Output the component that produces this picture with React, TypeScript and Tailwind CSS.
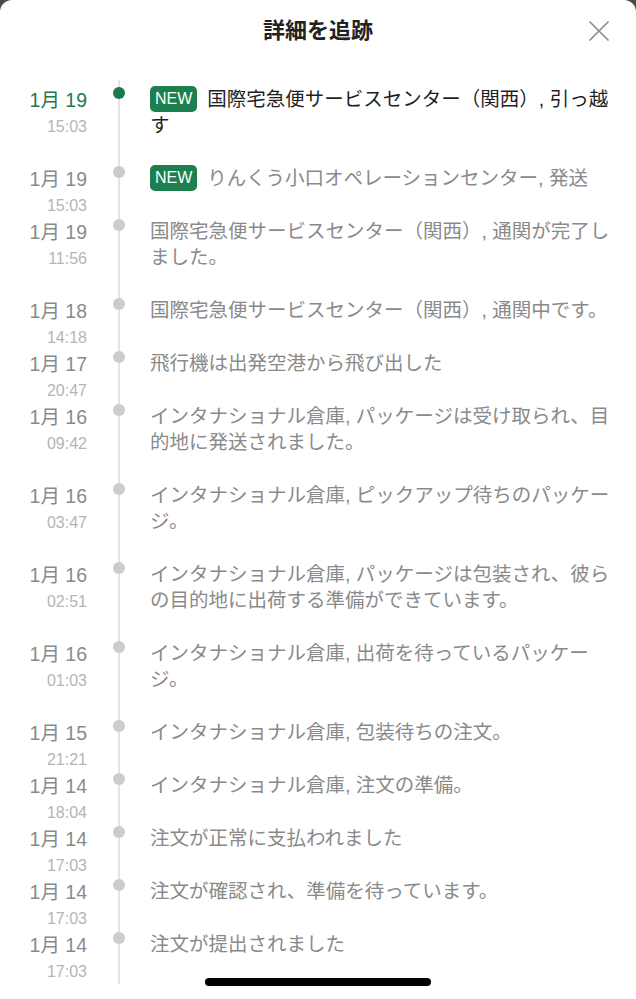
import React from "react";

type Item = { date: string; time: string; text: string; isNew?: boolean };

const items: Item[] = [
  { date: "1月 19", time: "15:03", text: "国際宅急便サービスセンター（関西）, 引っ越す", isNew: true },
  { date: "1月 19", time: "15:03", text: "りんくう小口オペレーションセンター, 発送", isNew: true },
  { date: "1月 19", time: "11:56", text: "国際宅急便サービスセンター（関西）, 通関が完了しました。" },
  { date: "1月 18", time: "14:18", text: "国際宅急便サービスセンター（関西）, 通関中です。" },
  { date: "1月 17", time: "20:47", text: "飛行機は出発空港から飛び出した" },
  { date: "1月 16", time: "09:42", text: "インタナショナル倉庫, パッケージは受け取られ、目的地に発送されました。" },
  { date: "1月 16", time: "03:47", text: "インタナショナル倉庫, ピックアップ待ちのパッケージ。" },
  { date: "1月 16", time: "02:51", text: "インタナショナル倉庫, パッケージは包装され、彼らの目的地に出荷する準備ができています。" },
  { date: "1月 16", time: "01:03", text: "インタナショナル倉庫, 出荷を待っているパッケージ。" },
  { date: "1月 15", time: "21:21", text: "インタナショナル倉庫, 包装待ちの注文。" },
  { date: "1月 14", time: "18:04", text: "インタナショナル倉庫, 注文の準備。" },
  { date: "1月 14", time: "17:03", text: "注文が正常に支払われました" },
  { date: "1月 14", time: "17:03", text: "注文が確認され、準備を待っています。" },
  { date: "1月 14", time: "17:03", text: "注文が提出されました" },
];

export default function App() {
  return (
    <div className="relative h-[999px] w-[636px] overflow-hidden bg-[#4a4a4a] font-['Liberation_Sans','Noto_Sans_CJK_JP',sans-serif]">
      <div className="h-full rounded-t-[12px] bg-white">
        <header className="grid h-[56px] grid-cols-[1fr_auto_1fr] items-center">
          <div />
          <h1 className="text-[22px] font-bold leading-[26px] text-[#222222] font-['Noto_Sans_CJK_JP',sans-serif]">
            詳細を追跡
          </h1>
          <div className="flex justify-end pr-[27px] pt-[5px]">
            <svg width="20" height="20" viewBox="0 0 20 20" fill="none">
              <path d="M1 1L19 19M19 1L1 19" stroke="#8c8c8c" strokeWidth="1.7" strokeLinecap="round" />
            </svg>
          </div>
        </header>
        <div className="mt-[24px]">
          {items.map((it, i) => {
            const first = i === 0;
            return (
              <div key={i} className="flex">
                <div className="w-[88px] shrink-0 pr-[1px] pt-[7px] text-right">
                  <div className={`text-[19.5px] leading-[26px] ${first ? "text-[#1c7a4c]" : "text-[#8a8a8a]"}`}>
                    {it.date}
                  </div>
                  <div className="mt-[8px] text-[16px] leading-[12px] text-[#b5b5b5]">{it.time}</div>
                </div>
                <div className="relative flex w-[62px] shrink-0 justify-center">
                  <div className="w-[2px] bg-[#e4e4e4]" />
                  <div
                    className={`absolute left-1/2 top-[7px] h-[12px] w-[12px] -translate-x-1/2 rounded-full ${
                      first ? "bg-[#1a7a4a]" : "bg-[#cccccc]"
                    }`}
                  />
                </div>
                <div
                  className={`flex-1 pb-[21px] pr-[20px] pt-[6px] text-[19.5px] leading-[26px] ${
                    first ? "text-[#1f1f1f]" : "text-[#8a8a8a]"
                  }`}
                >
                  {it.isNew && (
                    <span className="mr-[10px] inline-flex h-[26px] items-center rounded-[5px] bg-[#1d7f50] px-[5px] align-top text-[16px] leading-none text-white">
                      NEW
                    </span>
                  )}
                  {it.text}
                </div>
              </div>
            );
          })}
          <div className="flex">
            <div className="w-[88px] shrink-0" />
            <div className="flex h-[6px] w-[62px] shrink-0 justify-center">
              <div className="w-[2px] bg-[#e4e4e4]" />
            </div>
          </div>
        </div>
      </div>
      <div className="absolute left-[205px] top-[978px] h-[8px] w-[226px] rounded-full bg-black" />
    </div>
  );
}
